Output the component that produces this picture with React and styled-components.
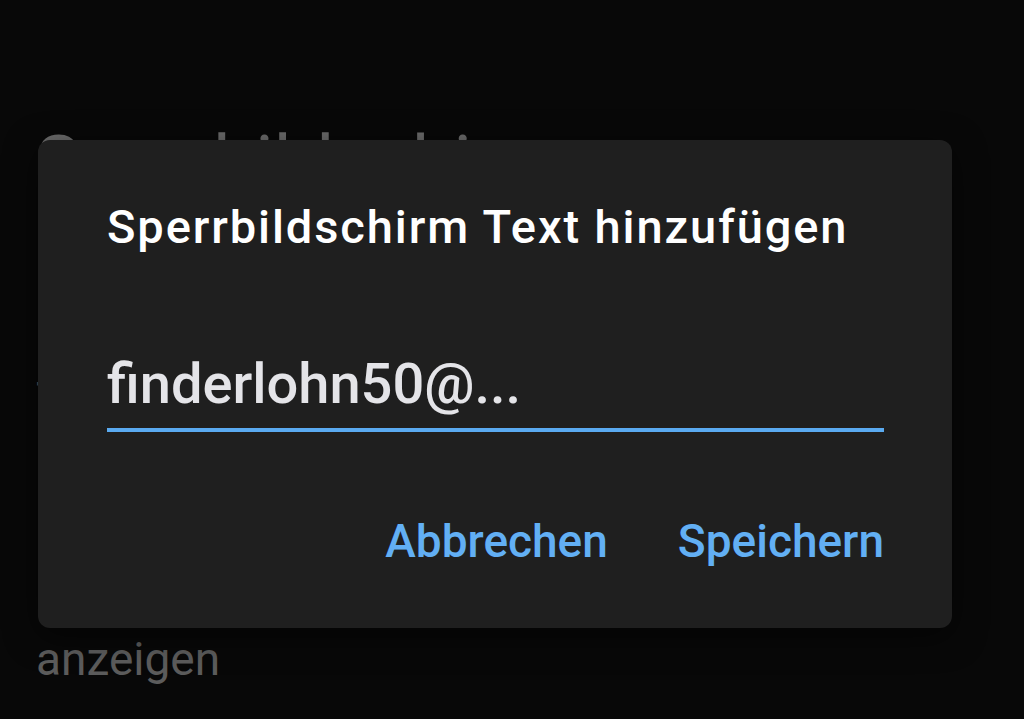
import styled, { createGlobalStyle } from "styled-components";

const GlobalStyle = createGlobalStyle`
  html, body {
    margin: 0;
    padding: 0;
    background: #080808;
  }
  body {
    font-family: Roboto, "Noto Sans", "Liberation Sans", sans-serif;
    -webkit-font-smoothing: antialiased;
  }
  #root {
    min-height: 100vh;
  }
`;

const Screen = styled.main`
  position: relative;
  width: 1024px;
  height: 719px;
  overflow: hidden;
  background: #080808;
`;

const Settings = styled.section`
  display: flex;
  flex-direction: column;
  padding: 117px 72px 0 36px;
  color: #6b6b6b;
`;

const PageTitle = styled.h1`
  margin: 0;
  font-size: 75px;
  font-weight: 400;
  line-height: 1.2;
  white-space: nowrap;
`;

const Row = styled.div`
  margin-top: ${({ $gap }) => $gap}px;
  font-size: 46px;
  line-height: 62px;
  color: #5c5c5c;
`;

const Backdrop = styled.div`
  position: absolute;
  inset: 0;
  display: flex;
  align-items: flex-start;
  padding: 140px 0 0 38px;
`;

const Dialog = styled.div`
  width: 914px;
  box-sizing: border-box;
  background: #1f1f1f;
  border-radius: 12px;
  padding: 59px 68px 58px 69px;
  box-shadow: 0 8px 32px rgba(0, 0, 0, 0.55);
  display: flex;
  flex-direction: column;
`;

const Title = styled.h2`
  margin: 0;
  color: #ffffff;
  font-size: 47px;
  font-weight: 500;
  letter-spacing: 1.9px;
  line-height: 1.2;
  white-space: nowrap;
`;

const Field = styled.div`
  margin-top: 96px;
  border-bottom: 4px solid #5aaaf0;
  padding-bottom: 11px;
`;

const FieldText = styled.div`
  color: #e4e4e8;
  font-size: 56px;
  font-weight: 500;
  line-height: 66px;
  white-space: nowrap;
`;

const Actions = styled.div`
  display: flex;
  justify-content: flex-end;
  gap: 70px;
  margin-top: 82px;
`;

const TextButton = styled.button`
  background: none;
  border: none;
  padding: 0;
  margin: 0;
  color: #62aff4;
  font-family: inherit;
  font-size: 46px;
  font-weight: 500;
  line-height: 1.2;
  cursor: pointer;
`;

export default function App() {
  return (
    <Screen>
      <GlobalStyle />
      <Settings>
        <PageTitle>Sperrbildschirm</PageTitle>
        <Row $gap={161}>Text auf dem Sperrbildschirm</Row>
        <Row $gap={136}>Kontaktdaten auf dem Sperrbildschirm anzeigen</Row>
      </Settings>
      <Backdrop>
        <Dialog role="dialog">
          <Title>Sperrbildschirm Text hinzufügen</Title>
          <Field>
            <FieldText>finderlohn50@...</FieldText>
          </Field>
          <Actions>
            <TextButton>Abbrechen</TextButton>
            <TextButton>Speichern</TextButton>
          </Actions>
        </Dialog>
      </Backdrop>
    </Screen>
  );
}
